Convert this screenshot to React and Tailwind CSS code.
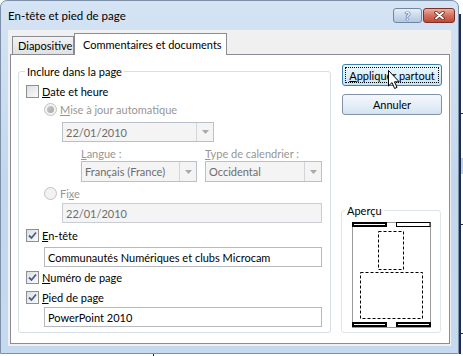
import React from 'react';

// Win7-style "En-tête et pied de page" dialog
const Check = ({ checked }) => (
    <span className="w-[13px] h-[13px] shrink-0 border border-[#8e8f8f] bg-gradient-to-br from-[#dcdfe3] to-[#fbfbfb] flex items-center justify-center">
        {checked && (
            <svg width="9" height="9" viewBox="0 0 9 9">
                <path d="M1 4.5 L3.5 7 L8 1.5" fill="none" stroke="#4a5d8c" strokeWidth="1.8" />
            </svg>
        )}
    </span>
);

const Radio = ({ selected }) => (
    <span className="w-[13px] h-[13px] shrink-0 rounded-full border border-[#c2c2c2] bg-[#f2f2f2] flex items-center justify-center">
        {selected && <span className="w-[7px] h-[7px] rounded-full bg-gradient-to-br from-[#c8c8c8] to-[#a9a9a9]" />}
    </span>
);

const Combo = ({ value, className }) => (
    <div className={`h-full flex border border-[#b9c0c9] bg-[#f4f4f4] ${className}`}>
        <span className="flex-1 pl-[3px] flex items-center text-[#6d6d6d]">{value}</span>
        <span className="w-[17px] border-l border-[#d2d6db] flex items-center justify-center">
            <svg width="7" height="4" viewBox="0 0 7 4">
                <path d="M0 0 H7 L3.5 4 Z" fill="#a9a9a9" />
            </svg>
        </span>
    </div>
);

const TextBox = ({ value, disabled, className }) => (
    <div className={`h-full flex items-center pl-[3px] border ${disabled ? 'border-[#c9cdd2] bg-[#f4f4f4] text-[#6d6d6d]' : 'border-[#b6b9bf] bg-white text-black'} ${className}`}>
        {value}
    </div>
);

const App = () => {
    return (
        <div className="w-[463px] h-[356px] bg-white flex flex-col overflow-hidden font-['Segoe_UI','Lato',sans-serif] text-[11px] leading-none text-black whitespace-nowrap">
            <div className="flex h-[354px]">
                {/* Window */}
                <div className="w-[459px] h-[354px] shrink-0 flex flex-col rounded-t-[7px] border border-[#7d90a8] bg-gradient-to-b from-[#d5e4f4] via-[#c2d7ee] to-[#c5daef]">
                    {/* Title bar */}
                    <div className="h-[29px] flex items-start pl-[7px] pr-[3px]">
                        <span className="mt-[9px] flex-1 text-[11.5px]">En-tête et pied de page</span>
                        <div className="mt-[7px] w-[29px] h-[15px] rounded-[3px] border border-[#6f86a3] bg-gradient-to-b from-[#e6eef8] via-[#cbdaec] to-[#b3c8e0] flex items-center justify-center">
                            <span className="font-bold text-[12px] text-white [text-shadow:0_0_1px_#2b466b,0_0_1px_#2b466b,0_0_1px_#2b466b]">?</span>
                        </div>
                        <div className="mt-[7px] ml-[1px] w-[32px] h-[15px] rounded-[3px] border border-[#7b3129] bg-gradient-to-b from-[#eab0a2] via-[#d4705f] to-[#c2483a] flex items-center justify-center">
                            <svg width="11" height="9" viewBox="0 0 11 9">
                                <path d="M2 1.5 L9 7.5 M9 1.5 L2 7.5" stroke="#5a1f18" strokeWidth="3.4" strokeLinecap="round" />
                                <path d="M2 1.5 L9 7.5 M9 1.5 L2 7.5" stroke="#ffffff" strokeWidth="1.9" strokeLinecap="round" />
                            </svg>
                        </div>
                    </div>

                    {/* Client area */}
                    <div className="mx-[7px] h-[316px] bg-[#f0f0f0] flex flex-col pl-[2px] pr-[1px] pt-[3px]">
                        {/* Tabs */}
                        <div className="h-[22px] flex items-end pl-[2px] relative z-10">
                            <div className="w-[62px] h-[18px] mb-[1px] border border-b-0 border-[#898c95] bg-gradient-to-b from-[#f2f2f2] to-[#e1e1e1] flex items-center pl-[5px]">
                                Diapositive
                            </div>
                            <div className="w-[153px] h-[22px] border border-b-0 border-[#898c95] bg-white flex items-start pt-[5px] pl-[8px]">
                                Commentaires et documents
                            </div>
                        </div>

                        {/* Tab panel */}
                        <div className="-mt-[1px] h-[290px] border border-[#898c95] bg-white flex pl-[7px] pt-[16px]">
                            {/* Inclure dans la page */}
                            <div className="relative w-[313px] h-[262px] border border-[#d5dfe5] rounded-[3px] flex flex-col pl-[7px]">
                                <span className="absolute -top-[6px] left-[6px] px-[2px] bg-white">Inclure dans la page</span>

                                <div className="mt-[11px] h-[16px] flex items-center gap-[3px]">
                                    <Check />
                                    <span><u>D</u>ate et heure</span>
                                </div>
                                <div className="mt-[2px] h-[16px] ml-[18px] flex items-center gap-[3px] text-[#969696]">
                                    <Radio selected />
                                    <span><u>M</u>ise à jour automatique</span>
                                </div>
                                <div className="mt-[5px] h-[20px] ml-[36px] flex">
                                    <Combo value="22/01/2010" className="w-[152px]" />
                                </div>
                                <div className="mt-[4px] h-[14px] ml-[55px] flex items-center text-[#969696]">
                                    <span className="w-[124px]"><u>L</u>angue :</span>
                                    <span><u>T</u>ype de calendrier :</span>
                                </div>
                                <div className="mt-[1px] h-[21px] ml-[55px] flex gap-[8px]">
                                    <Combo value="Français (France)" className="w-[116px]" />
                                    <Combo value="Occidental" className="w-[117px]" />
                                </div>
                                <div className="mt-[3px] h-[16px] ml-[18px] flex items-center gap-[3px] text-[#969696]">
                                    <Radio />
                                    <span>Fi<u>x</u>e</span>
                                </div>
                                <div className="mt-[2px] h-[20px] ml-[36px] flex">
                                    <TextBox value="22/01/2010" disabled className="w-[260px]" />
                                </div>
                                <div className="mt-[4px] h-[16px] flex items-center gap-[3px]">
                                    <Check checked />
                                    <span><u>E</u>n-tête</span>
                                </div>
                                <div className="mt-[4px] h-[20px] ml-[18px] flex">
                                    <TextBox value="Communautés Numériques et clubs Microcam" className="w-[278px]" />
                                </div>
                                <div className="mt-[2px] h-[16px] flex items-center gap-[3px]">
                                    <Check checked />
                                    <span><u>N</u>uméro de page</span>
                                </div>
                                <div className="mt-[4px] h-[16px] flex items-center gap-[3px]">
                                    <Check checked />
                                    <span><u>P</u>ied de page</span>
                                </div>
                                <div className="mt-[2px] h-[20px] ml-[18px] flex">
                                    <TextBox value="PowerPoint 2010" className="w-[278px]" />
                                </div>
                            </div>

                            {/* Right column */}
                            <div className="ml-[10px] flex flex-col -mt-[7px]">
                                <div className="relative ml-[1px] w-[100px] h-[22px] rounded-[3px] border border-[#3c7fb1] bg-gradient-to-b from-[#ecf7fd] via-[#dcf0fb] to-[#bfe4f8] p-[2px]">
                                    <div className="w-full h-full border border-dotted border-black flex items-center justify-center">
                                        <span><u>A</u>ppliquer partout</span>
                                    </div>
                                    <svg className="absolute left-[45px] top-[5px]" width="13" height="20" viewBox="0 0 13 20">
                                        <path d="M0.5 0.5 L0.5 16 L4 12.6 L6.6 18.5 L9 17.4 L6.5 11.8 L11.2 11.8 Z" fill="#ffffff" stroke="#000000" strokeWidth="1" strokeLinejoin="round" />
                                    </svg>
                                </div>
                                <div className="mt-[8px] ml-[1px] w-[100px] h-[21px] rounded-[3px] border border-[#8192a8] bg-gradient-to-b from-[#f4f8fc] via-[#e6eff8] to-[#d5e3f1] flex items-center justify-center">
                                    Annuler
                                </div>

                                {/* Aperçu */}
                                <div className="relative mt-[95px] w-[100px] h-[123px] border border-[#dde4ea] rounded-[3px] pl-[10px] pt-[11px]">
                                    <span className="absolute -top-[6px] left-[3px] px-[2px] bg-white">Aperçu</span>
                                    <svg width="79" height="106" viewBox="0 0 79 106">
                                        <rect x="0.5" y="0.5" width="78" height="105" fill="#ffffff" stroke="#9a9a9a" />
                                        <rect x="1" y="1" width="33" height="3" fill="#ffffff" stroke="#000" strokeWidth="2" />
                                        <rect x="44.5" y="0.5" width="33.5" height="4" fill="#ffffff" stroke="#000" strokeWidth="1" />
                                        <rect x="1" y="101" width="33" height="3" fill="#ffffff" stroke="#000" strokeWidth="2" />
                                        <rect x="45" y="101" width="33" height="3" fill="#ffffff" stroke="#000" strokeWidth="2" />
                                        <rect x="26.5" y="9.5" width="25" height="38" fill="none" stroke="#000" strokeDasharray="3 2" />
                                        <rect x="8.5" y="50.5" width="62" height="46" fill="none" stroke="#000" strokeDasharray="3 2" />
                                    </svg>
                                </div>
                            </div>
                        </div>
                    </div>
                </div>

                {/* Underlying application edge */}
                <div className="flex-1 flex flex-col pt-[14px]">
                    <div className="flex-1 border-l-2 border-[#1d2b4f] flex flex-col">
                        <div className="mt-[99px] h-[1px] bg-[#333]" />
                        <div className="mt-[44px] h-[16px] bg-[#bcd6ee]" />
                        <div className="mt-[50px] h-[1px] bg-[#333]" />
                        <div className="mt-[108px] h-[1px] bg-[#333]" />
                    </div>
                </div>
            </div>
            <div className="flex-1 flex">
                <div className="ml-[153px] w-[1px] bg-[#222]" />
            </div>
        </div>
    );
};

export default App;
